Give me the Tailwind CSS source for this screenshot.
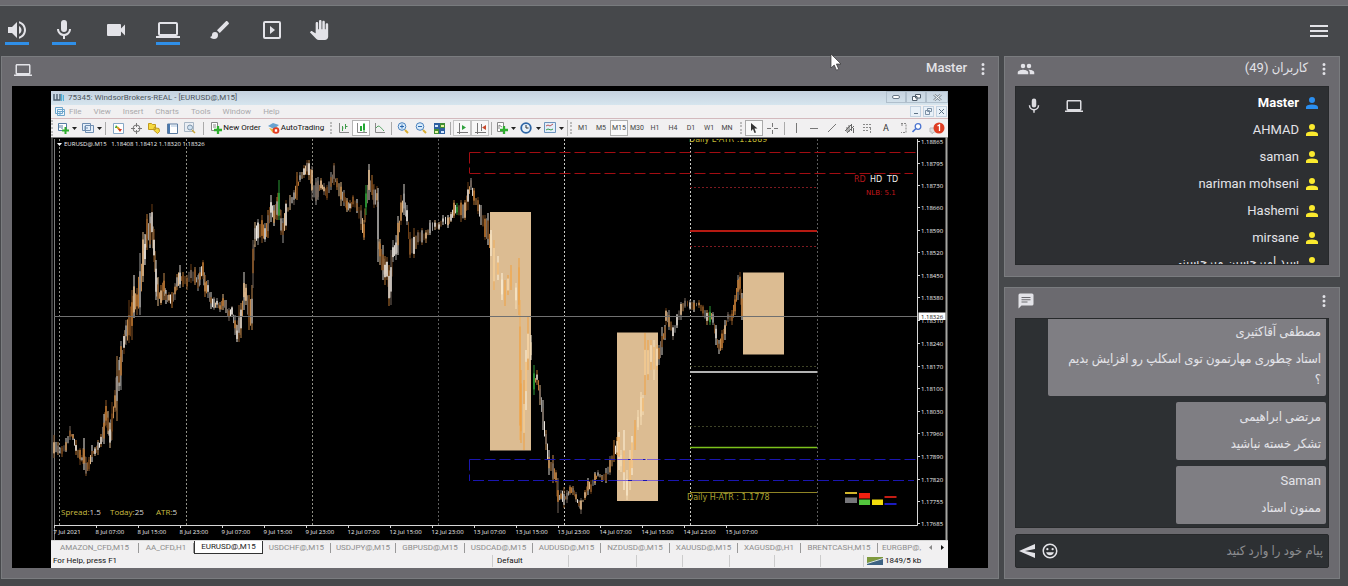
<!DOCTYPE html>
<html lang="fa">
<head>
<meta charset="utf-8">
<meta name="viewport" content="width=device-width, initial-scale=1">
<title>Master - Webinar</title>
<script src="https://cdn.jsdelivr.net/npm/@tailwindcss/browser@4"></script>
</head>
<body class="h-screen overflow-hidden bg-[#46484b] font-['Roboto','DejaVu_Sans_Condensed','DejaVu_Sans',sans-serif] text-[#e3e3e8]">

<svg class="hidden">
  <symbol id="laptop" viewBox="0 0 24 24"><path d="M4,6H20V16H4M20,18A2,2 0 0,0 22,16V6C22,4.89 21.1,4 20,4H4C2.89,4 2,4.89 2,6V16A2,2 0 0,0 4,18H0V20H24V18H20Z"/></symbol>
  <symbol id="mic" viewBox="0 0 24 24"><path d="M12,2A3,3 0 0,1 15,5V11A3,3 0 0,1 12,14A3,3 0 0,1 9,11V5A3,3 0 0,1 12,2M19,11C19,14.53 16.39,17.44 13,17.93V21H11V17.93C7.61,17.44 5,14.53 5,11H7A5,5 0 0,0 12,16A5,5 0 0,0 17,11H19Z"/></symbol>
  <symbol id="dots" viewBox="0 0 24 24"><path d="M12,16A2,2 0 0,1 14,18A2,2 0 0,1 12,20A2,2 0 0,1 10,18A2,2 0 0,1 12,16M12,10A2,2 0 0,1 14,12A2,2 0 0,1 12,14A2,2 0 0,1 10,12A2,2 0 0,1 12,10M12,4A2,2 0 0,1 14,6A2,2 0 0,1 12,8A2,2 0 0,1 10,6A2,2 0 0,1 12,4Z"/></symbol>
  <symbol id="user" viewBox="0 0 24 24"><path d="M12,4A4,4 0 0,1 16,8A4,4 0 0,1 12,12A4,4 0 0,1 8,8A4,4 0 0,1 12,4M4,20V17.500C4,15.500 7,14 12,14S20,15.500 20,17.500V20Z"/></symbol>
  <symbol id="plus" viewBox="0 0 7 7"><path d="M2.5 0h2v2.5H7v2H4.5V7h-2V4.5H0v-2h2.5z" fill="#2fae2f"/></symbol>
</svg>

<div class="flex h-full flex-col pb-[7px]">
  <header class="flex h-14 shrink-0 items-start justify-between border-t-[5px] border-[#6c6b70] pr-5 pl-[5px] shadow-[inset_0_1px_0_#787b7e]">
    <nav class="flex gap-[23px] pt-[13px]">
      <button aria-label="Speaker" class="h-[27px] w-6 border-b-3 border-[#2f8fe8]"><svg class="size-6 fill-current" viewBox="0 0 24 24"><path d="M14,3.23V5.29C16.89,6.15 19,8.83 19,12C19,15.17 16.89,17.84 14,18.7V20.77C18,19.86 21,16.28 21,12C21,7.72 18,4.14 14,3.23M16.5,12C16.5,10.23 15.5,8.71 14,7.97V16C15.5,15.29 16.5,13.76 16.5,12M3,9V15H7L12,20V4L7,9H3Z"/></svg></button>
      <span class="flex gap-7">
        <button aria-label="Microphone" class="h-[27px] w-6 border-b-3 border-[#2f8fe8]"><svg class="size-6 fill-current"><use href="#mic"/></svg></button>
        <button aria-label="Camera" class="h-6 w-6"><svg class="size-6 fill-current" viewBox="0 0 24 24"><path d="M17,10.5V7A1,1 0 0,0 16,6H4A1,1 0 0,0 3,7V17A1,1 0 0,0 4,18H16A1,1 0 0,0 17,17V13.5L21,17.5V6.5L17,10.5Z"/></svg></button>
        <button aria-label="Share screen" class="h-[27px] w-6 border-b-3 border-[#2f8fe8]"><svg class="size-6 fill-current"><use href="#laptop"/></svg></button>
        <button aria-label="Whiteboard" class="h-6 w-6"><svg class="size-6 fill-current" viewBox="0 0 24 24"><path d="M20.71,4.63L19.37,3.29C19,2.9 18.35,2.9 17.96,3.29L9,12.25L11.75,15L20.71,6.04C21.1,5.65 21.1,5 20.71,4.63M7,14A3,3 0 0,0 4,17C4,18.31 2.84,19 2,19C2.92,20.22 4.5,21 6,21A4,4 0 0,0 10,17A3,3 0 0,0 7,14Z"/></svg></button>
        <button aria-label="Play media" class="h-6 w-6"><svg class="size-6 fill-current" viewBox="0 0 24 24"><path d="M19,19H5V5H19M19,3H5A2,2 0 0,0 3,5V19A2,2 0 0,0 5,21H19A2,2 0 0,0 21,19V5A2,2 0 0,0 19,3M10,8V16L15,12"/></svg></button>
      </span>
      <button aria-label="Raise hand" class="h-6 w-6 p-[2px]"><svg class="size-5 fill-current" viewBox="0 0 24 24"><path d="M23 5.5V20c0 2.2-1.8 4-4 4h-7.3c-1.08 0-2.1-.43-2.85-1.19L1 14.83s1.26-1.23 1.3-1.25c.22-.19.49-.29.79-.29.22 0 .42.06.6.16.04.01 4.31 2.46 4.31 2.46V4c0-.83.67-1.5 1.5-1.5S11 3.17 11 4v7h1V1.5c0-.83.67-1.5 1.5-1.5S15 .67 15 1.5V11h1V2.5c0-.83.67-1.5 1.5-1.5s1.5.67 1.5 1.5V11h1V5.5c0-.83.67-1.5 1.5-1.5s1.5.67 1.5 1.5z"/></svg></button>
    </nav>
    <button aria-label="Menu" class="flex flex-col gap-[3px] pt-5"><i class="h-[2px] w-[18px] bg-[#e3e3e8]"></i><i class="h-[2px] w-[18px] bg-[#e3e3e8]"></i><i class="h-[2px] w-[18px] bg-[#e3e3e8]"></i></button>
  </header>

  <main class="flex min-h-0 flex-1 gap-[5px] pr-2 pl-px">
    <section class="flex min-w-0 flex-1 flex-col border border-[#7a7c7f] bg-[#6b6a6f] px-[10px] pb-[10px]">
      <div class="flex h-[29px] shrink-0 items-start justify-between pt-[3px]">
        <svg class="mt-px ml-[2px] size-[18px] fill-current"><use href="#laptop"/></svg>
        <div class="flex items-start gap-[7px]"><h2 class="text-[13px] leading-4 font-medium">Master</h2><button aria-label="Options"><svg class="-mr-1 size-[18px] fill-current"><use href="#dots"/></svg></button></div>
      </div>

      <!-- shared desktop -->
      <div class="flex min-h-0 flex-1 flex-col bg-black pt-[5px] pr-10 pl-[39px]">
       <div class="flex min-h-0 flex-1 flex-col overflow-hidden bg-[#f1f0f1] font-['Roboto',sans-serif] text-[8px] leading-3 whitespace-nowrap text-[#333]">
        <div class="flex h-[14px] shrink-0 items-center bg-linear-to-b from-[#c5d2df] to-[#d6e5ee] pl-[2px]">
          <svg class="h-[8px] w-[11px]" viewBox="0 0 11 8"><path d="M1 0v6h3V0M4 6h3V0" fill="none" stroke="#4d5f6f" stroke-width="1.4"/><path d="M8.500 0v7M10.500 1v6" stroke="#4fb0d8" stroke-width="1.300"/></svg>
          <span class="ml-1 text-[#4c545c]">75345: WindsorBrokers-REAL - [EURUSD@,M15]</span>
          <span class="ml-auto flex h-full pb-[2px]">
            <button aria-label="Minimize" class="flex w-5 items-center justify-center border border-[#b0bfcc]"><i class="h-[4px] w-2 rounded-xs border border-[#687786] bg-white"></i></button>
            <button aria-label="Restore" class="flex w-5 items-center justify-center border border-[#b0bfcc]"><svg class="h-[7px] w-[9px]" viewBox="0 0 9 7" fill="#fff" stroke="#4f5d6b"><path d="M3.500 .5h5v3.500h-5zM.5 2.500h4.500v4h-4.500z"/></svg></button>
            <button aria-label="Close" class="flex w-[22px] items-center justify-center border border-[#b0bfcc]"><svg class="h-[7px] w-[9px]" viewBox="0 0 9 7" fill="none"><path d="M1 .5l7 6M8 .5l-7 6" stroke="#7d8b97" stroke-width="2.400"/><path d="M1 .5l7 6M8 .5l-7 6" stroke="#fff"/></svg></button>
          </span>
        </div>
        <div class="flex h-[13px] shrink-0 items-center gap-3 pl-[3px] text-[#a9a9ab]">
          <svg class="-mr-2 size-[11px]" viewBox="0 0 11 11" fill="#eef6fc" stroke="#6ea6cc"><path d="M1.500 1.500h7v6h-7zM3.500 3.500h7v6h-7zM3.500 5.500h7M6 5.500v4"/></svg>
          <span>File</span><span>View</span><span>Insert</span><span>Charts</span><span>Tools</span><span>Window</span><span>Help</span>
          <span class="ml-auto flex gap-[2px] pr-px">
            <button aria-label="Minimize chart" class="flex size-[11px] items-end justify-center border border-[#c3d3e2] bg-[#e9f1f8] pb-[2px]"><i class="h-px w-1 bg-[#5d7286]"></i></button>
            <button aria-label="Restore chart" class="flex size-[11px] items-center justify-center border border-[#c3d3e2] bg-[#e9f1f8]"><svg class="size-[7px]" viewBox="0 0 7 7" fill="none" stroke="#7b8fa3"><path d="M2.500 .5h4v3h-4zM.5 2.500h4v4h-4z"/></svg></button>
            <button aria-label="Close chart" class="flex size-[11px] items-center justify-center border border-[#c3d3e2] bg-[#e9f1f8]"><svg class="size-[5px]" viewBox="0 0 5 5" stroke="#5d7286"><path d="M0 0l5 5M5 0l-5 5"/></svg></button>
          </span>
        </div>

        <div class="flex h-[19px] shrink-0 items-center border-t border-[#d3b9bd] *:shrink-0 *:flex *:h-4 *:items-center *:justify-center">
          <span class="w-[3px] border-l-2 border-dotted border-[#bbb]"></span>
          <button aria-label="New chart" class="w-[18px]"><svg class="size-3" viewBox="0 0 12 12"><path d="M1.500 1.500h8v7h-8z" fill="#fff" stroke="#557ca3"/><path d="M3 6V3m2 4V3" stroke="#557ca3"/><use href="#plus" x="5" y="5" width="7" height="7"/></svg></button>
          <span class="w-[5px]"><svg class="h-[3px] w-[5px]" viewBox="0 0 5 3"><path d="M0 0h5L2.500 3z" fill="#222"/></svg></span>
          <button aria-label="Profiles" class="ml-[2px] w-[18px]"><svg class="size-3" viewBox="0 0 12 12" fill="#e5effa" stroke="#6f8db0"><path d="M3.500 3.500h8v7h-8zM.5 1.500h8v7h-8z"/><path d="M3 8.500V4m2 3V5" /></svg></button>
          <span class="w-[5px]"><svg class="h-[3px] w-[5px]" viewBox="0 0 5 3"><path d="M0 0h5L2.500 3z" fill="#222"/></svg></span>
          <span class="w-[7px]"><i class="h-[13px] w-px bg-[#aaa]"></i></span>
          <button aria-label="Market watch" class="w-[18px]"><svg class="size-[11px]" viewBox="0 0 11 11"><path d="M.5 .5h10v10H.5z" fill="#fff" stroke="#86a8c6"/><path d="M3 2l2 3H2z" fill="#2aa52a"/><path d="M4 4l3 3" stroke="#d8a020" stroke-width="2"/><path d="M7 9l2-3H5z" fill="#d23a2a"/></svg></button>
          <button aria-label="Data window" class="w-[18px]"><svg class="size-[11px]" viewBox="0 0 11 11" fill="none" stroke="#777"><circle cx="5.500" cy="5.500" r="3.500"/><path d="M5.500 0v4M5.500 7v4M0 5.500h4M7 5.500h4"/></svg></button>
          <button aria-label="Navigator" class="w-[18px]"><svg class="size-3" viewBox="0 0 12 12" fill="#f5d93f" stroke="#c19a1e"><path d="M.5 1.500h3l1 1h3v5h-7zM5.500 8l1-3 1.500 1 3 .5.500 3-2 2z"/></svg></button>
          <button aria-label="Terminal" class="w-[18px]"><svg class="size-[11px]" viewBox="0 0 11 11"><path d="M.5 1h10v9.500H.5z" fill="#fff" stroke="#5a7ba0"/><path d="M1 1h2v9H1z" fill="#4a78ad"/><path d="M4 3h6" stroke="#aac4df"/></svg></button>
          <button aria-label="Strategy tester" class="w-[18px]"><svg class="size-3" viewBox="0 0 12 12"><path d="M.5 .5h9v9h-9z" fill="#e9eef4" stroke="#a8b6c5"/><circle cx="6" cy="5.500" r="2.500" fill="#cfe2f2" stroke="#7e93a8"/><path d="M8 8l3 3" stroke="#c9a63a" stroke-width="1.500"/></svg></button>
          <span class="w-2"><i class="h-[13px] w-px bg-[#aaa]"></i></span>
          <button class="w-[57px] gap-px"><svg class="size-3" viewBox="0 0 12 12"><path d="M1.500 .5h6v8h-6z" fill="#fff" stroke="#888"/><path d="M3 3h3M3 5h3" stroke="#888"/><use href="#plus" x="4" y="4" width="8" height="8"/></svg><span class="text-[#111]">New Order</span></button>
          <button class="w-[64px] gap-px"><svg class="size-3" viewBox="0 0 12 12"><path d="M0 4l5-3 6 2-5 4z" fill="#69a3d0"/><path d="M1 6l4 5 5-3-1-3-4 2z" fill="#eab83e"/><circle cx="8" cy="8.500" r="3.300" fill="#e23b22"/><path d="M6.800 7.300h2.400v2.400h-2.400z" fill="#fff"/></svg><span class="text-[#111]">AutoTrading</span></button>
          <span class="w-[6px]"><i class="h-3 border-l-2 border-dotted border-[#bbb]"></i></span>
          <button aria-label="Bar chart" class="w-[18px]"><svg class="size-[11px]" viewBox="0 0 11 11" fill="none"><path d="M1.500 0v9.500H11" stroke="#888"/><path d="M4.500 3v5M7.500 1v5M7.500 3.500h2M4.500 5h1" stroke="#3f9b4a"/></svg></button>
          <button aria-label="Candlesticks" class="w-[18px] border border-[#b5b5b5] bg-white"><svg class="size-[11px]" viewBox="0 0 11 11" fill="none"><path d="M1.500 0v9.500H11" stroke="#888"/><path d="M4 3h2v5H4zM7 1h2v6H7z" fill="#22a632"/><path d="M8 0v9" stroke="#22a632"/></svg></button>
          <button aria-label="Line chart" class="w-[18px]"><svg class="size-[11px]" viewBox="0 0 11 11" fill="none"><path d="M1.500 0v9.500H11" stroke="#888"/><path d="M2 5c3-4 4-1 8 3" stroke="#4b9e5a"/></svg></button>
          <span class="w-[6px]"><i class="h-[13px] w-px bg-[#aaa]"></i></span>
          <button aria-label="Zoom in" class="w-[18px]"><svg class="size-3" viewBox="0 0 12 12"><circle cx="5" cy="4.500" r="3.800" fill="#d7ebfb" stroke="#4c82bd"/><path d="M3 4.500h4M5 2.500v4" stroke="#2c68ae"/><path d="M8 8l3 3" stroke="#d8ae34" stroke-width="2"/></svg></button>
          <button aria-label="Zoom out" class="w-[18px]"><svg class="size-3" viewBox="0 0 12 12"><circle cx="5" cy="4.500" r="3.800" fill="#d7ebfb" stroke="#4c82bd"/><path d="M3 4.500h4" stroke="#2c68ae"/><path d="M8 8l3 3" stroke="#d8ae34" stroke-width="2"/></svg></button>
          <button aria-label="Tile windows" class="w-[18px]"><svg class="size-[11px]" viewBox="0 0 11 11"><path d="M0 0h11v11H0z" fill="#2d5f9f"/><path d="M6 0h5v5H6zM0 6h5v5H0z" fill="#3f8d33"/><path d="M1 2h3v2H1zM7 8h3v2H7z" fill="#d5e7ff"/><path d="M7 2h3v2H7zM1 8h3v2H1z" fill="#e4f2a0"/></svg></button>
          <span class="w-[5px]"><i class="h-[13px] w-px bg-[#aaa]"></i></span>
          <button aria-label="Auto scroll" class="w-[18px] border border-[#c5c5c5] bg-[#f8f8f8]"><svg class="size-[11px]" viewBox="0 0 11 11" fill="none" stroke="#777"><path d="M2.500 0v11M0 9.500h11"/><path d="M5 2l4 2.500L5 7z" fill="#2fa13d" stroke="none"/></svg></button>
          <button aria-label="Chart shift" class="w-[18px] border border-[#c5c5c5] bg-[#f8f8f8]"><svg class="size-[11px]" viewBox="0 0 11 11" fill="none" stroke="#777"><path d="M2.500 0v11M0 9.500h11M6.500 1v7"/><path d="M11 2L7 4.500 11 7z" fill="#c8492b" stroke="none"/></svg></button>
          <span class="w-[4px]"><i class="h-[13px] w-px bg-[#aaa]"></i></span>
          <button aria-label="Indicators" class="w-[18px]"><svg class="size-3" viewBox="0 0 12 12"><path d="M1.500 .5h6v9h-6z" fill="#fff" stroke="#888"/><path d="M3 7V3l3 2" stroke="#888" fill="none"/><use href="#plus" x="4" y="4" width="8" height="8"/></svg></button>
          <span class="w-[5px]"><svg class="h-[3px] w-[5px]" viewBox="0 0 5 3"><path d="M0 0h5L2.500 3z" fill="#222"/></svg></span>
          <button aria-label="Periods" class="w-5"><svg class="size-3" viewBox="0 0 12 12"><circle cx="6" cy="6" r="4.800" fill="#e8f2fb" stroke="#2e66a6" stroke-width="1.800"/><path d="M6 3v3h2.500" stroke="#333" fill="none"/></svg></button>
          <span class="w-[5px]"><svg class="h-[3px] w-[5px]" viewBox="0 0 5 3"><path d="M0 0h5L2.500 3z" fill="#222"/></svg></span>
          <button aria-label="Templates" class="w-[18px]"><svg class="size-3" viewBox="0 0 12 12"><path d="M.5 .5h11v10H.5z" fill="#e3eefa" stroke="#6d93bc"/><path d="M2 4l2-1 2 1 3-2" stroke="#b55" fill="none"/><path d="M2 8l2-1 3 1 2-1" stroke="#3a9a4a" fill="none"/></svg></button>
          <span class="w-[5px]"><svg class="h-[3px] w-[5px]" viewBox="0 0 5 3"><path d="M0 0h5L2.500 3z" fill="#222"/></svg></span>
          <span class="w-[10px] gap-[2px]"><i class="h-4 w-px bg-[#bbb]"></i><i class="h-3 border-l-2 border-dotted border-[#bbb]"></i></span>
          <span class="text-[7px] text-[#444] *:h-4 *:w-[18px]">
            <button>M1</button><button>M5</button><button class="border border-[#b0b0b0] bg-[#fafafa]">M15</button><button>M30</button><button>H1</button><button>H4</button><button>D1</button><button>W1</button><button>MN</button>
          </span>
          <span class="w-[9px]"><i class="h-3 border-l-2 border-dotted border-[#bbb]"></i></span>
          <button aria-label="Cursor" class="w-[18px] border border-[#aaa] bg-[#f8f8f8]"><svg class="h-[10px] w-[7px]" viewBox="0 0 7 10"><path d="M0 0v8l2-2 1.500 4 1.500-.6L3.500 5.500H6.500z" fill="#333"/></svg></button>
          <button aria-label="Crosshair" class="w-[18px]"><svg class="size-[11px]" viewBox="0 0 11 11" stroke="#777"><path d="M5.500 0v4M5.500 7v4M0 5.500h4M7 5.500h4"/></svg></button>
          <span class="w-[6px]"><i class="h-[13px] w-px bg-[#aaa]"></i></span>
          <button aria-label="Vertical line" class="w-[18px]"><i class="h-[10px] w-px bg-[#777]"></i></button>
          <button aria-label="Horizontal line" class="w-[18px]"><i class="h-px w-2 bg-[#777]"></i></button>
          <button aria-label="Trendline" class="w-[18px]"><svg class="size-2" viewBox="0 0 8 8"><path d="M0 8l8-8" stroke="#777"/></svg></button>
          <button aria-label="Channel" class="w-[18px]"><svg class="size-[10px]" viewBox="0 0 10 10" stroke="#666" fill="none"><path d="M0 8l7-7M2 10l7-7M2 4v5M4 2v7M6.500 1v7M8.500 5v5"/></svg></button>
          <button aria-label="Fibonacci" class="w-[18px]"><svg class="size-[10px]" viewBox="0 0 10 10" stroke="#888" stroke-dasharray="2 1"><path d="M0 1.500h9M0 4.500h9M0 7.500h6M7.500 5v5"/></svg></button>
          <button aria-label="Text" class="w-[18px] text-[9px]">A</button>
          <button aria-label="Text label" class="w-[16px]"><svg class="size-[10px]" viewBox="0 0 10 10" stroke="#888" fill="none" stroke-dasharray="2 1"><path d="M3 .5h5v9H3M3 2h3"/></svg></button>
          <button aria-label="Search" class="w-3"><svg class="size-[10px]" viewBox="0 0 10 10"><circle cx="6" cy="3.500" r="2.800" fill="#fff" stroke="#4a74d0" stroke-width="1.300"/><path d="M4 5.500L.5 9" stroke="#4a74d0" stroke-width="1.600"/></svg></button>
          <button aria-label="Notifications" class="mr-px ml-auto w-5"><svg class="h-[13px] w-4" viewBox="0 0 16 13"><path d="M1 6h8v4H5l-2 2v-2H1z" fill="#ddd" stroke="#bbb"/><circle cx="10" cy="6" r="5.500" fill="#df3d22"/><path d="M8.500 4l2-1.200V9" stroke="#fff" stroke-width="1.300" fill="none"/></svg></button>
        </div>

        <svg id="chart" class="min-h-0 w-full flex-1 bg-black" viewBox="51 137 897 404" preserveAspectRatio="xMidYMid meet" font-family="'Open Sans', sans-serif">
          <path d="M51 137.500H948M52 137v404M54.500 139V541" stroke="#7c7c7c" fill="none"/>
          <path d="M946.500 137v404" stroke="#a5a5a2" stroke-width="2"/>
          <g stroke-dasharray="2 2" fill="none">
            <path d="M59.500 139V525M186.500 139V525M312.500 139V525" stroke="#8f8f86"/>
            <path d="M438.500 139V525M817.500 139V525" stroke="#5c5c5c"/>
            <path d="M564.500 139V525M690.500 139V525" stroke="#c9c9c4"/>
          </g>
          <g fill="#dcbc92"><path d="M490 212h41v238.500h-41zM617 332.500h41v168.500h-41zM743 272.500h41v82h-41z"/></g>
          <g id="candles"></g>
          <path d="M469.500 152.500V173M469.500 152.500H917M469.500 173.500H913" stroke="#a30d12" stroke-dasharray="11 4" fill="none"/>
          <path d="M469.500 459.500V481M469.500 459.500H917M473 480.500H914" stroke="#1a16b0" stroke-dasharray="11 4" fill="none"/>
          <path d="M617 459.500h41M617 480.500h41" stroke="#7f62cf" stroke-dasharray="11 4"/>
          <path d="M54 316.500H917" stroke="#707070"/>
          <path d="M690 187.500H817M690 246.500H817" stroke="#7d1a20" stroke-dasharray="2 2"/>
          <path d="M690 231H817" stroke="#b61a12" stroke-width="2"/>
          <path d="M690 366.500H817M690 426.500H817" stroke="#3e4327" stroke-dasharray="2 2"/>
          <path d="M690 372H817" stroke="#b3b3b3" stroke-width="2"/>
          <path d="M690 447.500H817" stroke="#7cc21c" stroke-width="1.500"/>
          <path d="M690 492.500H817" stroke="#8f8425"/>
          <path d="M917.500 139V525.500H54" stroke="#d6d6d6" fill="none"/>
          <path d="M51 540.500H948" stroke="#d6d6d6"/>
          <path d="M57 143h5l-2.500 3z" fill="#fff"/>
          <g fill="#f2f2f2" font-size="6" id="axis"></g>
          <text x="64" y="146" font-size="6" fill="#f2f2f2">EURUSD@.M15&#160;&#160; 1.18408 1.18412 1.18320 1.18326</text>
          <g font-size="8">
            <text x="61" y="515" fill="#c9bd42">Spread:<tspan fill="#d8d8d8">1.5</tspan></text>
            <text x="110" y="515" fill="#c9bd42">Today:<tspan fill="#d8d8d8">25</tspan></text>
            <text x="156" y="515" fill="#c9bd42">ATR:<tspan fill="#d8d8d8">5</tspan></text>
            <text x="687" y="500" fill="#aaa030" font-family="DejaVu Sans">Daily H-ATR : 1.1778</text>
            <svg x="680" y="139" width="120" height="10" viewBox="680 139 120 10"><text x="689" y="142" fill="#c3b934" font-family="DejaVu Sans">Daily L-ATR :1.1889</text></svg>
            <text x="854" y="182" fill="#b5181c" font-family="DejaVu Sans">RD</text><text x="870" y="182" fill="#eee" font-family="DejaVu Sans">HD</text><text x="887" y="182" fill="#eee" font-family="DejaVu Sans">TD</text>
            <text x="866" y="195" fill="#c4161a" font-size="7" font-family="DejaVu Sans">NLB: 5.1</text>
          </g>
          <path d="M845 492h12v2h-12z" fill="#d0b52c"/><path d="M845 497.500h12v5.500h-12z" fill="#76767a"/><path d="M859 493h11v5.500h-11z" fill="#f02010"/><path d="M859 499.500h11v5.500h-11z" fill="#52c63d"/><path d="M872 499.500h11v5.500h-11z" fill="#f3dc0c"/><path d="M884.500 496h12v2h-12z" fill="#c41d14"/><path d="M884.500 503h12v2h-12z" fill="#1c1cc0"/>
        </svg>

        <div class="flex h-[13px] shrink-0 items-center text-[#8d8d8d] *:flex *:h-[10px] *:shrink-0 *:items-center *:justify-center *:border-r *:border-[#999]">
          <button class="w-[88px]">AMAZON_CFD,M15</button><button class="w-[55px] border-r-0">AA_CFD,H1</button><button class="h-[13px]! w-[69px] border border-t-0 border-[#333]! bg-white text-[#222]">EURUSD@,M15</button><button class="w-[68px]">USDCHF@,M15</button><button class="w-[65px]">USDJPY@,M15</button><button class="w-[69px]">GBPUSD@,M15</button><button class="w-[68px]">USDCAD@,M15</button><button class="w-[68px]">AUDUSD@,M15</button><button class="w-[69px]">NZDUSD@,M15</button><button class="w-[68px]">XAUUSD@,M15</button><button class="w-[63px]">XAGUSD@,H1</button><button class="w-[77px]">BRENTCASH,M15</button><button class="w-[47px] border-r-0!">EURGBP@,</button><button aria-label="Previous tabs" class="w-[10px] border-r-0!"><svg class="h-[5px] w-[3px] fill-[#888]" viewBox="0 0 3 5"><path d="M3 0v5L0 2.500z"/></svg></button><button aria-label="Next tabs" class="w-[14px] border-r-0!"><svg class="h-[5px] w-[3px] fill-[#111]" viewBox="0 0 3 5"><path d="M0 0v5l3-2.500z"/></svg></button>
        </div>
        <div class="flex h-[14px] shrink-0 items-center text-[#111] *:h-3 *:shrink-0 *:border-r *:border-[#ccc]">
          <span class="w-[442px] pl-[2px]">For Help, press F1</span><span class="w-[76px] pl-1">Default</span><span class="w-[68px]"></span><span class="w-[46px]"></span><span class="w-[47px]"></span><span class="w-[45px]"></span><span class="w-[46px]"></span><span class="w-[43px]"></span>
          <span class="flex items-center gap-[2px] border-r-0! pl-[3px]"><svg class="h-[8px] w-4" viewBox="0 0 16 8"><path d="M0 0h16v8H0z" fill="#7f9a3e"/><path d="M0 8V6L16 1v7z" fill="#3e6384"/><path d="M0 6.500L16 1.500" stroke="#dfe8d8"/></svg>1849/5 kb</span>
        </div>
       </div>
      </div>
    </section>

    <aside dir="rtl" class="flex w-[336px] shrink-0 flex-col gap-[10px]">
      <section class="flex h-[221px] flex-col border border-[#7a7c7f] bg-[#6b6a6f] px-[10px] pb-[11px]">
        <div class="flex h-[29px] shrink-0 items-start justify-between pt-[3px]">
          <div class="flex items-start gap-[7px]"><button aria-label="گزینه‌ها"><svg class="-mr-1 size-[18px] fill-current"><use href="#dots"/></svg></button><h2 class="text-[13px] leading-4">کاربران (49)</h2></div>
          <svg class="ml-[2px] size-[18px] fill-current" viewBox="0 0 24 24"><path d="M16,13C15.71,13 15.38,13 15.03,13.05C16.19,13.89 17,15 17,16.5V19H23V16.5C23,14.17 18.33,13 16,13M8,13C5.67,13 1,14.17 1,16.5V19H15V16.5C15,14.17 10.33,13 8,13M8,11A3,3 0 0,0 11,8A3,3 0 0,0 8,5A3,3 0 0,0 5,8A3,3 0 0,0 8,11M16,11A3,3 0 0,0 19,8A3,3 0 0,0 16,5A3,3 0 0,0 13,8A3,3 0 0,0 16,11Z"/></svg>
        </div>
        <ul class="min-h-0 flex-1 overflow-hidden border border-[#27292b] bg-[#2d2f32] pt-[2px] pr-[7px] pl-[9px] text-[13px] leading-4 *:flex *:h-[27px] *:items-center *:gap-[4px]">
          <li class="font-bold text-white"><svg class="size-[18px] fill-[#2b8ff0]"><use href="#user"/></svg>Master<span class="mr-auto flex gap-[22px] pt-[6px] text-[#dcdce0]"><svg class="size-[18px] fill-current"><use href="#laptop"/></svg><svg class="size-[18px] fill-current"><use href="#mic"/></svg></span></li>
          <li><svg class="size-[18px] fill-[#fbea2e]"><use href="#user"/></svg>AHMAD</li>
          <li><svg class="size-[18px] fill-[#fbea2e]"><use href="#user"/></svg>saman</li>
          <li><svg class="size-[18px] fill-[#fbea2e]"><use href="#user"/></svg>nariman mohseni</li>
          <li><svg class="size-[18px] fill-[#fbea2e]"><use href="#user"/></svg>Hashemi</li>
          <li><svg class="size-[18px] fill-[#fbea2e]"><use href="#user"/></svg>mirsane</li>
          <li class="items-start! pt-[3px]"><svg class="size-[18px] fill-[#fbea2e]"><use href="#user"/></svg><span class="pt-px leading-[14px]">سید امیرحسین میرحسینی</span></li>
        </ul>
      </section>

      <section class="flex min-h-0 flex-1 flex-col border border-[#7a7c7f] bg-[#6b6a6f] px-[10px] pb-[10px]">
        <div class="flex h-[30px] shrink-0 items-start justify-between pt-1">
          <button aria-label="گزینه‌ها"><svg class="-mr-1 size-[18px] fill-current"><use href="#dots"/></svg></button>
          <svg class="ml-[2px] size-[18px] fill-current" viewBox="0 0 24 24"><path d="M20,2H4A2,2 0 0,0 2,4V22L6,18H20A2,2 0 0,0 22,16V4A2,2 0 0,0 20,2M6,6.500H18V8H6M18,11H6V9.500H18M14,14H6V12.500H14"/></svg>
        </div>
        <div class="flex min-h-0 flex-1 flex-col items-start justify-end gap-[6px] overflow-hidden border border-[#27292b] bg-[#2d3033] px-[2px] pb-[3px] text-[13px] leading-[21px] *:flex *:min-w-[150px] *:shrink-0 *:flex-col *:gap-[6px] *:rounded-xs *:bg-[#7f7e83] *:px-[5px] *:pt-1 *:pb-[6px]">
          <article class="w-[278px]"><h3>مصطفی آقاکثیری</h3><p>استاد چطوری مهارتمون توی اسکلپ رو افزایش بدیم<br>؟</p></article>
          <article><h3>مرتضی ابراهیمی</h3><p>تشکر خسته نباشید</p></article>
          <article><h3>Saman</h3><p>ممنون استاد</p></article>
        </div>
        <form class="mt-[6px] flex h-[34px] shrink-0 items-center gap-[6px] rounded-xs border border-[#27292b] bg-[#2d3033] pr-[5px] pl-[3px]">
          <input type="text" aria-label="پیام" placeholder="پیام خود را وارد کنید" class="min-w-0 flex-1 bg-transparent text-[13px] outline-none placeholder:text-[#8b8c8f]">
          <button type="button" aria-label="شکلک"><svg class="size-[18px] fill-current" viewBox="0 0 24 24"><path d="M12,2C6.480,2 2,6.480 2,12A10,10 0 1,0 12,2M12,20A8,8 0 1,1 12,4A8,8 0 0,1 12,20M8.500,8A1.500,1.500 0 1,1 8.500,11A1.500,1.500 0 0,1 8.500,8M15.500,8A1.500,1.500 0 1,1 15.500,11A1.500,1.500 0 0,1 15.500,8M6.800,13.500H17.200C16.500,16 14.500,17.500 12,17.500S7.500,16 6.800,13.500Z"/></svg></button>
          <button type="button" aria-label="ارسال"><svg class="h-[14px] w-4 fill-current" viewBox="0 0 16 14"><path d="M16 0L0 7l16 7V9L6 7l10-2z"/></svg></button>
        </form>
      </section>
    </aside>
  </main>
</div>

<!-- pointer -->
<svg class="pointer-events-none absolute top-[53px] left-[830px] h-[18px] w-3" viewBox="0 0 12 18"><path d="M1 1v14l3.200-3 2.300 5.200 2.200-1L6.400 11H11z" fill="#fff" stroke="#333" stroke-width=".7"/></svg>

<script>
// x, high, low
const bars = [54,435,458,58,442,455,62,446,457,66,438,452,70,426,440,73,434,440,76,440,455,80,448,465,82,455,462,84,438,470,86,457,476,89,457,471,92,445,462,95,447,456,98,440,455,101,434,447,104,414,444,106,400,425,108,411,434,110,423,448,112,402,440,115,390,412,117,356,421,119,360,391,121,341,390,124,334,354,126,320,345,129,300,343,132,290,340,134,275,318,137,288,315,140,253,315,143,232,282,145,234,265,147,214,250,150,213,248,152,204,240,154,229,262,156,260,300,158,277,306,161,285,305,164,273,300,166,290,304,169,292,303,172,292,308,175,283,300,177,274,290,180,265,288,183,272,287,187,275,290,191,264,283,195,267,285,198,275,291,200,267,285,203,260,279,205,275,297,208,280,298,211,292,309,214,297,310,217,298,308,220,302,312,223,294,310,226,300,313,229,308,321,232,306,317,235,315,335,237,325,342,239,305,342,241,303,338,244,272,310,246,284,305,249,295,330,252,285,330,253,240,288,255,222,247,258,219,245,262,215,243,265,223,242,268,210,238,271,195,222,274,205,226,277,197,220,279,180,220,281,210,235,283,218,243,286,200,230,290,195,210,294,190,205,297,172,200,300,172,182,304,165,178,307,160,175,309,160,180,312,166,200,316,178,205,318,177,200,321,178,190,324,183,195,327,185,200,331,172,190,334,163,185,337,178,190,341,182,206,344,190,206,347,198,212,350,200,212,353,195,207,357,199,213,361,205,230,364,220,240,366,185,215,369,164,200,372,175,195,374,184,208,377,186,207,378,188,262,380,239,265,383,245,280,385,256,285,387,257,280,389,265,306,391,250,305,393,240,262,396,235,260,398,216,255,401,195,225,404,184,215,407,205,225,410,232,258,414,228,258,418,230,245,422,228,245,426,230,243,430,220,235,435,220,230,439,222,230,443,215,225,448,215,228,451,212,222,454,200,218,457,203,215,461,200,222,465,200,220,468,182,210,471,178,190,474,188,205,478,197,214,481,205,225,485,215,240,488,213,245,491,230,256,494,240,290,498,256,280,502,273,300,505,280,306,508,275,295,511,265,290,516,283,309,519,258,315,520,300,440,521,370,443,524,380,450,526,350,410,528,317,370,531,335,360,534,365,395,537,370,385,540,385,405,543,400,430,546,430,450,549,450,475,553,455,483,556,470,483,558,478,513,561,490,500,564,487,508,567,490,503,570,485,495,573,486,495,576,492,502,579,500,507,581,498,514,585,490,500,588,478,495,591,480,494,595,472,485,598,470,477,602,475,482,606,468,483,610,456,475,614,440,462,617,437,455,619,432,470,621,450,472,624,430,490,627,470,500,630,450,490,632,436,475,635,420,450,638,410,430,641,392,425,643,395,415,645,333,395,648,340,380,651,340,370,654,340,380,657,345,370,659,345,365,662,327,355,665,325,340,666,308,325,669,310,330,673,325,340,677,314,328,681,302,320,685,298,308,690,300,310,694,300,312,699,300,308,703,305,316,707,310,325,710,306,325,713,312,325,716,325,345,719,340,354,722,330,350,725,320,340,728,312,322,732,310,325,735,295,315,738,275,300,740,272,295,742,293,320];
let seed = 11;
const rnd = () => (seed = (seed * 16807) % 2147483647) / 2147483647;
const dark = ["#8a5626", "#c28a4e", "#d9d3cc", "#75675c", "#e0b98a", "#6b3d14", "#9c9a98", "#b87430", "#efe9e2"];
const lit = ["#f0a040", "#fff3dc", "#f2ae58", "#f7dfb8"];
const green = [279, 366, 457, 534, 710];
let out = "";
const inBox = x => (x >= 491 && x <= 531) || (x >= 617 && x <= 658);
function bar(x, h, l, w) {
  const set = inBox(x) ? lit : dark;
  const c = green.includes(x) ? "#2b9a35" : set[Math.floor(rnd() * set.length)];
  out += `<rect x="${x - w / 2}" y="${h}" width="${w}" height="${l - h}" fill="${c}"/>`;
}
for (let i = 0; i < bars.length; i += 3) {
  const [x, h, l, nx, nh, nl] = bars.slice(i, i + 6);
  const q = (l - h) * 0.25;
  if (nx - x > 1 && !inBox(x)) bar((x + nx) / 2, (h + nh) / 2 + q * (0.6 + rnd()), (l + nl) / 2 - q * (0.3 + rnd()), 1);
  bar(x, h, l, 1);
  bar(x, h + q * (0.4 + rnd()), l - q * (0.4 + rnd()), inBox(x) ? 1 : 1.6);
}
document.getElementById("candles").innerHTML = out;

const prices = [["1.18865",142],["1.18795",164],["1.18730",186],["1.18660",208],["1.18590",231],["1.18520",253],["1.18450",276],["1.18380",298],["1.18310",321],["1.18240",344],["1.18170",367],["1.18100",389],["1.18030",412],["1.17960",434],["1.17890",457],["1.17820",480],["1.17755",502],["1.17685",524]];
const times = ["7 Jul 2021","8 Jul 07:00","8 Jul 15:00","8 Jul 23:00","9 Jul 07:00","9 Jul 15:00","9 Jul 23:00","12 Jul 07:00","12 Jul 15:00","12 Jul 23:00","13 Jul 07:00","13 Jul 15:00","13 Jul 23:00","14 Jul 07:00","14 Jul 15:00","14 Jul 23:00","15 Jul 07:00"];
document.getElementById("axis").innerHTML =
  prices.map(([t, y]) => `<path d="M917 ${y - .5}h3" stroke="#d6d6d6"/><text x="921" y="${y + 2}">${t}</text>`).join("") +
  times.map((t, i) => `<path d="M${54.5 + i * 42} 525v3" stroke="#d6d6d6"/><text x="${53.5 + i * 42}" y="534">${t}</text>`).join("") +
  `<path d="M918.500 312.500h27v7.500h-27z" fill="#fff"/><text x="921" y="318.500" fill="#111">1.18326</text>`;
</script>
</body>
</html>
